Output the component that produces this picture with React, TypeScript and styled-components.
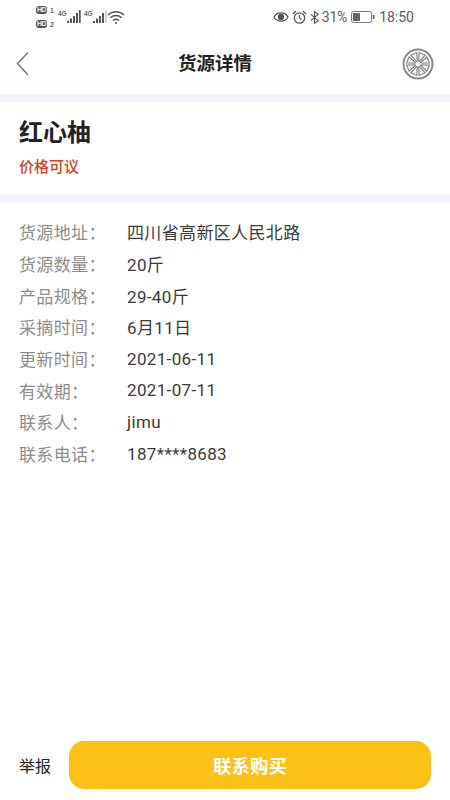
import React from "react";
import styled, { createGlobalStyle } from "styled-components";

const Global = createGlobalStyle`
  html, body { margin: 0; padding: 0; background: #fff; }
  * { box-sizing: border-box; }
  body { font-family: "Roboto", "Noto Sans CJK SC", sans-serif; }
`;
const Page = styled.div`
  width: 450px; height: 800px; display: flex; flex-direction: column; background: #fff; overflow: hidden;
`;
const StatusBar = styled.div`
  height: 34px; padding: 0 36px; display: flex; justify-content: space-between; align-items: center; color: #555;
`;
const StatusLeft = styled.div`display: flex; align-items: center;`;
const SimColumn = styled.div`display: flex; flex-direction: column; gap: 6px; width: 22px;`;
const SimRow = styled.div`display: flex; align-items: flex-end; gap: 3px;`;
const HdBadge = styled.span`
  width: 11px; height: 8px; border-radius: 3px; background: #555; color: #eee;
  font: 700 7px/8px "Liberation Sans", sans-serif; text-align: center; letter-spacing: -0.5px;
`;
const SimNumber = styled.span`font: 700 7px/7px "Liberation Sans", sans-serif; color: #666;`;
const Net = styled.div`display: flex; align-items: flex-start; width: 26px;`;
const NetLabel = styled.span`font: 700 6.500px/8px "Liberation Sans", sans-serif; color: #666; width: 9px; flex: none;`;
const StatusRight = styled.div`display: flex; align-items: center; font-size: 14px; color: #5a5a5a;`;
const Percent = styled.span`margin-left: 3px; letter-spacing: -0.2px;`;
const Clock = styled.span`margin-left: 4px;`;
const Alarm = styled.svg`margin-left: 3px;`;
const Bluetooth = styled.svg`margin-left: 3px;`;
const Battery = styled.svg`margin-left: 4px;`;
const Wifi = styled.svg`margin-left: -3px;`;
const NavBar = styled.div`
  height: 60px; display: flex; align-items: center; justify-content: space-between; padding: 0 16px 0 15px;
`;
const NavTitle = styled.div`font-size: 18.500px; font-weight: 700; color: #222; margin-left: -3px; margin-top: -4px;`;
const Divider = styled.div`height: 8px; background: #f0f4f8;`;
const Hero = styled.div`height: 93px; padding: 15px 19px 0;`;
const Name = styled.div`font-size: 24px; line-height: 33px; font-weight: 700; color: #222;`;
const Price = styled.div`font-size: 15px; line-height: 22px; margin-top: 6px; font-weight: 500; color: #d4401c;`;
const Info = styled.div`padding: 13px 19px 0; flex: 1; display: flex; flex-direction: column;`;
const Row = styled.div`display: flex; height: 31.700px; align-items: center; font-size: 17px; letter-spacing: 0.350px;`;
const Label = styled.div`width: 108px; color: #8c8c8c;`;
const Value = styled.div`color: #3a3a3a;`;
const Footer = styled.div`display: flex; align-items: center; padding: 0 19px; height: 70px;`;
const Report = styled.div`width: 50px; font-size: 16px; color: #222;`;
const Buy = styled.div`
  flex: 1; height: 48px; border-radius: 15px; background: #fbc117; color: #fff; font-weight: 700; font-size: 18.500px;
  display: flex; align-items: center; justify-content: center;
`;

const Bars = ({ faded }: { faded?: boolean }) => (
  <svg width="14" height="14" viewBox="0 0 14 14" fill="#555">
    <rect x="0" y="11" width="2" height="2" />
    <rect x="3" y="8.500" width="2" height="4.500" />
    <rect x="6" y="6" width="2" height="7" />
    <rect x="9" y="3" width="2" height="10" />
    <rect x="12" y="0" width="1.700" height="13" fill={faded ? "#ccc" : "#555"} />
  </svg>
);

const wedges = Array.from({ length: 8 }, (_, i) => {
  const at = (r: number, deg: number) => {
    const a = ((i * 45 + 22.500 + deg) * Math.PI) / 180;
    return `${(16 + r * Math.cos(a)).toFixed(2)} ${(16 + r * Math.sin(a)).toFixed(2)}`;
  };
  return `M${at(3, -8)}L${at(11.500, -17)}L${at(11.500, 17)}L${at(3, 8)}Z`;
});

export default function App() {
  const rows: [string, string][] = [
    ["货源地址\uFF1A", "四川省高新区人民北路"],
    ["货源数量\uFF1A", "20斤"],
    ["产品规格\uFF1A", "29-40斤"],
    ["采摘时间\uFF1A", "6月11日"],
    ["更新时间\uFF1A", "2021-06-11"],
    ["有效期\uFF1A", "2021-07-11"],
    ["联系人\uFF1A", "jimu"],
    ["联系电话\uFF1A", "187****8683"],
  ];
  return (
    <Page>
      <Global />
      <StatusBar>
        <StatusLeft>
          <SimColumn>
            <SimRow><HdBadge>HD</HdBadge><SimNumber>1</SimNumber></SimRow>
            <SimRow><HdBadge>HD</HdBadge><SimNumber>2</SimNumber></SimRow>
          </SimColumn>
          <Net><NetLabel>4G</NetLabel><Bars /></Net>
          <Net><NetLabel>4G</NetLabel><Bars faded /></Net>
          <Wifi width="18" height="15" viewBox="0 0 18 15" fill="none" stroke="#555" strokeWidth="1.500">
            <path d="M1 5c4.500-4.500 11.500-4.500 16 0" />
            <path d="M3.500 7.800c3-3 8-3 11 0" />
            <path d="M6 10.500c1.800-1.500 4.200-1.500 6 0" />
            <circle cx="9" cy="13" r="1" fill="#555" stroke="none" />
          </Wifi>
        </StatusLeft>
        <StatusRight>
          <svg width="16" height="14" viewBox="0 0 16 14" fill="none" stroke="#555" strokeWidth="1.300">
            <path d="M1 7c3-5.500 11-5.500 14 0c-3 5.500-11 5.500-14 0z" />
            <circle cx="8" cy="7" r="2.500" fill="#555" />
          </svg>
          <Alarm width="15" height="15" viewBox="0 0 15 15" fill="none" stroke="#555" strokeWidth="1.300">
            <circle cx="7.500" cy="8" r="5.200" />
            <path d="M7.500 5v3l2 1.500M1 4l3-3M14 4l-3-3" />
          </Alarm>
          <Bluetooth width="9" height="15" viewBox="0 0 10 15" fill="none" stroke="#555" strokeWidth="1.300">
            <path d="M1 4l8 7-4 3V1l4 3-8 7" />
          </Bluetooth>
          <Percent>31%</Percent>
          <Battery width="24" height="14" viewBox="0 0 24 14">
            <rect x="0.500" y="1.500" width="20" height="11" rx="2" fill="none" stroke="#777" />
            <rect x="2" y="3" width="7" height="8" fill="#666" />
            <rect x="21.800" y="5" width="1.700" height="4" fill="#666" />
          </Battery>
          <Clock>18:50</Clock>
        </StatusRight>
      </StatusBar>
      <NavBar>
        <svg width="16" height="26" viewBox="0 0 16 26" fill="none" stroke="#777" strokeWidth="1.500">
          <path d="M13 1.500L2.500 12.500 13 24" />
        </svg>
        <NavTitle>货源详情</NavTitle>
        <svg width="32" height="32" viewBox="0 0 32 32" fill="none" stroke="#8a8a8a">
          <circle cx="16" cy="16" r="14.500" strokeWidth="2" />
          {wedges.map((d) => (
            <path key={d} d={d} strokeWidth="1.200" fill="#f2f2f2" />
          ))}
        </svg>
      </NavBar>
      <Divider />
      <Hero>
        <Name>红心柚</Name>
        <Price>价格可议</Price>
      </Hero>
      <Divider />
      <Info>
        {rows.map(([k, v]) => (
          <Row key={k}>
            <Label>{k}</Label>
            <Value>{v}</Value>
          </Row>
        ))}
      </Info>
      <Footer>
        <Report>举报</Report>
        <Buy>联系购买</Buy>
      </Footer>
    </Page>
  );
}
